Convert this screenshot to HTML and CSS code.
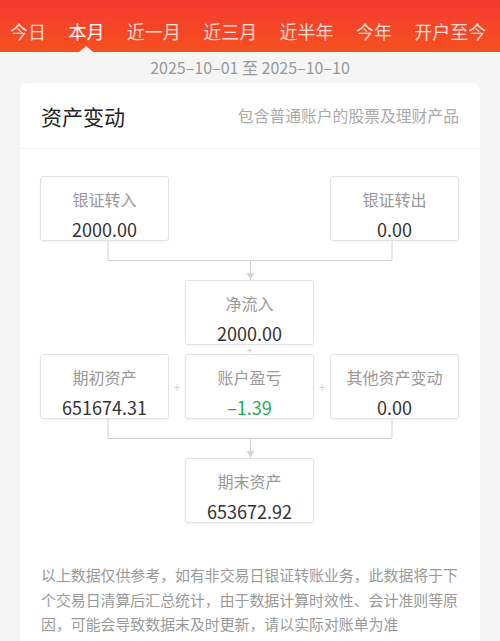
FILE: index.html
```html
<!DOCTYPE html>
<html lang="zh-CN">
<head>
    <meta charset="UTF-8">
    <meta name="viewport" content="width=device-width, initial-scale=1.0">
    <title>资产变动</title>
    <link rel="stylesheet" href="styles.css">
</head>
<body>
    <!-- Period tabs -->
    <div class="tabs">
        <span class="tab">今日</span>
        <span class="tab active">本月</span>
        <span class="tab">近一月</span>
        <span class="tab">近三月</span>
        <span class="tab">近半年</span>
        <span class="tab">今年</span>
        <span class="tab">开户至今</span>
    </div>

    <div class="date-range">2025–10–01 至 2025–10–10</div>

    <div class="card">
        <div class="card-head">
            <h2>资产变动</h2>
            <span class="note">包含普通账户的股票及理财产品</span>
        </div>

        <div class="flow">
            <!-- Transfers -->
            <div class="row row-split">
                <div class="box">
                    <div class="label">银证转入</div>
                    <div class="value">2000.00</div>
                </div>
                <div class="box">
                    <div class="label">银证转出</div>
                    <div class="value">0.00</div>
                </div>
            </div>

            <svg class="link" viewBox="0 0 419 39" width="419" height="39">
                <polyline points="68,0 68,19.5 352,19.5 352,0" fill="none" stroke="#d2d2d2" stroke-width="1"/>
                <line x1="210.5" y1="19.5" x2="210.5" y2="39" stroke="#d2d2d2" stroke-width="1"/>
                <polygon points="206.5,32 214.5,32 210.5,38" fill="#d2d2d2"/>
            </svg>

            <div class="row row-center">
                <div class="box">
                    <div class="label">净流入</div>
                    <div class="value">2000.00</div>
                </div>
            </div>

            <div class="plus plus-down">+</div>

            <!-- Profit and loss -->
            <div class="row row-sum">
                <div class="box">
                    <div class="label">期初资产</div>
                    <div class="value">651674.31</div>
                </div>
                <div class="plus">+</div>
                <div class="box">
                    <div class="label">账户盈亏</div>
                    <div class="value down">–1.39</div>
                </div>
                <div class="plus">+</div>
                <div class="box">
                    <div class="label">其他资产变动</div>
                    <div class="value">0.00</div>
                </div>
            </div>

            <svg class="link" viewBox="0 0 419 39" width="419" height="39">
                <polyline points="68,0 68,19.5 352,19.5 352,0" fill="none" stroke="#d2d2d2" stroke-width="1"/>
                <line x1="210.5" y1="19.5" x2="210.5" y2="39" stroke="#d2d2d2" stroke-width="1"/>
                <polygon points="206.5,32 214.5,32 210.5,38" fill="#d2d2d2"/>
            </svg>

            <div class="row row-center">
                <div class="box">
                    <div class="label">期末资产</div>
                    <div class="value">653672.92</div>
                </div>
            </div>
        </div>

        <p class="tip">以上数据仅供参考，如有非交易日银证转账业务，此数据将于下个交易日清算后汇总统计，由于数据计算时效性、会计准则等原因，可能会导致数据末及时更新，请以实际对账单为准</p>
    </div>
</body>
</html>
```

FILE: styles.css
```css
/* Page */
body {
    margin: 0;
    background-color: #f5f5f5;
    font-family: "Noto Sans CJK SC", "Noto Sans", sans-serif;
    color: #333;
}

/* Period tabs */
.tabs {
    display: flex;
    gap: 22.4px;
    height: 52px;
    padding: 19px 0 0 10px;
    box-sizing: border-box;
    background: linear-gradient(#f43a2f, #f6501f);
    white-space: nowrap;
    overflow: hidden;
}

.tab {
    position: relative;
    font-size: 18px;
    line-height: 24px;
    color: rgba(255, 255, 255, 0.82);
}

.tab.active {
    color: #fff;
}

.tab.active::after {
    content: "";
    position: absolute;
    left: 50%;
    top: 27px;
    margin-left: -7px;
    border-left: 7px solid transparent;
    border-right: 7px solid transparent;
    border-bottom: 6px solid #f5f5f5;
}

.date-range {
    height: 31px;
    line-height: 30px;
    text-align: center;
    font-size: 16px;
    color: #999;
}

/* Card */
.card {
    margin: 0 20px;
    min-height: 600px;
    background-color: #fff;
    border-radius: 8px;
}

.card-head {
    display: flex;
    align-items: center;
    justify-content: space-between;
    height: 65px;
    padding: 0 21px;
    border-bottom: 1px solid #f2f2f2;
}

.card-head h2 {
    margin: 0;
    font-size: 21px;
    font-weight: normal;
    color: #222;
}

.card-head .note {
    font-size: 15.8px;
    color: #aaa;
}

/* Flow diagram */
.flow {
    width: 419px;
    margin: 0 0 0 20px;
    padding-top: 27px;
}

.row {
    display: flex;
}

.row-split {
    justify-content: space-between;
}

.row-center {
    justify-content: center;
}

.row-sum {
    display: grid;
    grid-template-columns: 129px 16px 129px 16px 129px;
    align-items: center;
}

.link {
    display: block;
}

.box {
    width: 129px;
    height: 65px;
    box-sizing: border-box;
    padding-top: 10px;
    border: 1px solid #e2e2e2;
    border-radius: 3px;
    box-shadow: 0 1px 2px rgba(0, 0, 0, 0.05);
    text-align: center;
}

.label {
    font-size: 16px;
    line-height: 24px;
    color: #999;
}

.value {
    margin-top: 8px;
    font-size: 18px;
    line-height: 20px;
    color: #333;
}

.value.down {
    color: #1fa95a;
}

.plus {
    font-size: 12px;
    line-height: 12px;
    text-align: center;
    color: #ccc;
}

.plus-down {
    height: 9px;
    font-size: 10px;
    line-height: 9px;
    position: relative;
    z-index: 1;
}

/* Footnote */
.tip {
    margin: 0;
    padding: 40px 20px 20px 21px;
    font-size: 14.9px;
    line-height: 24.5px;
    color: #999;
}
```
